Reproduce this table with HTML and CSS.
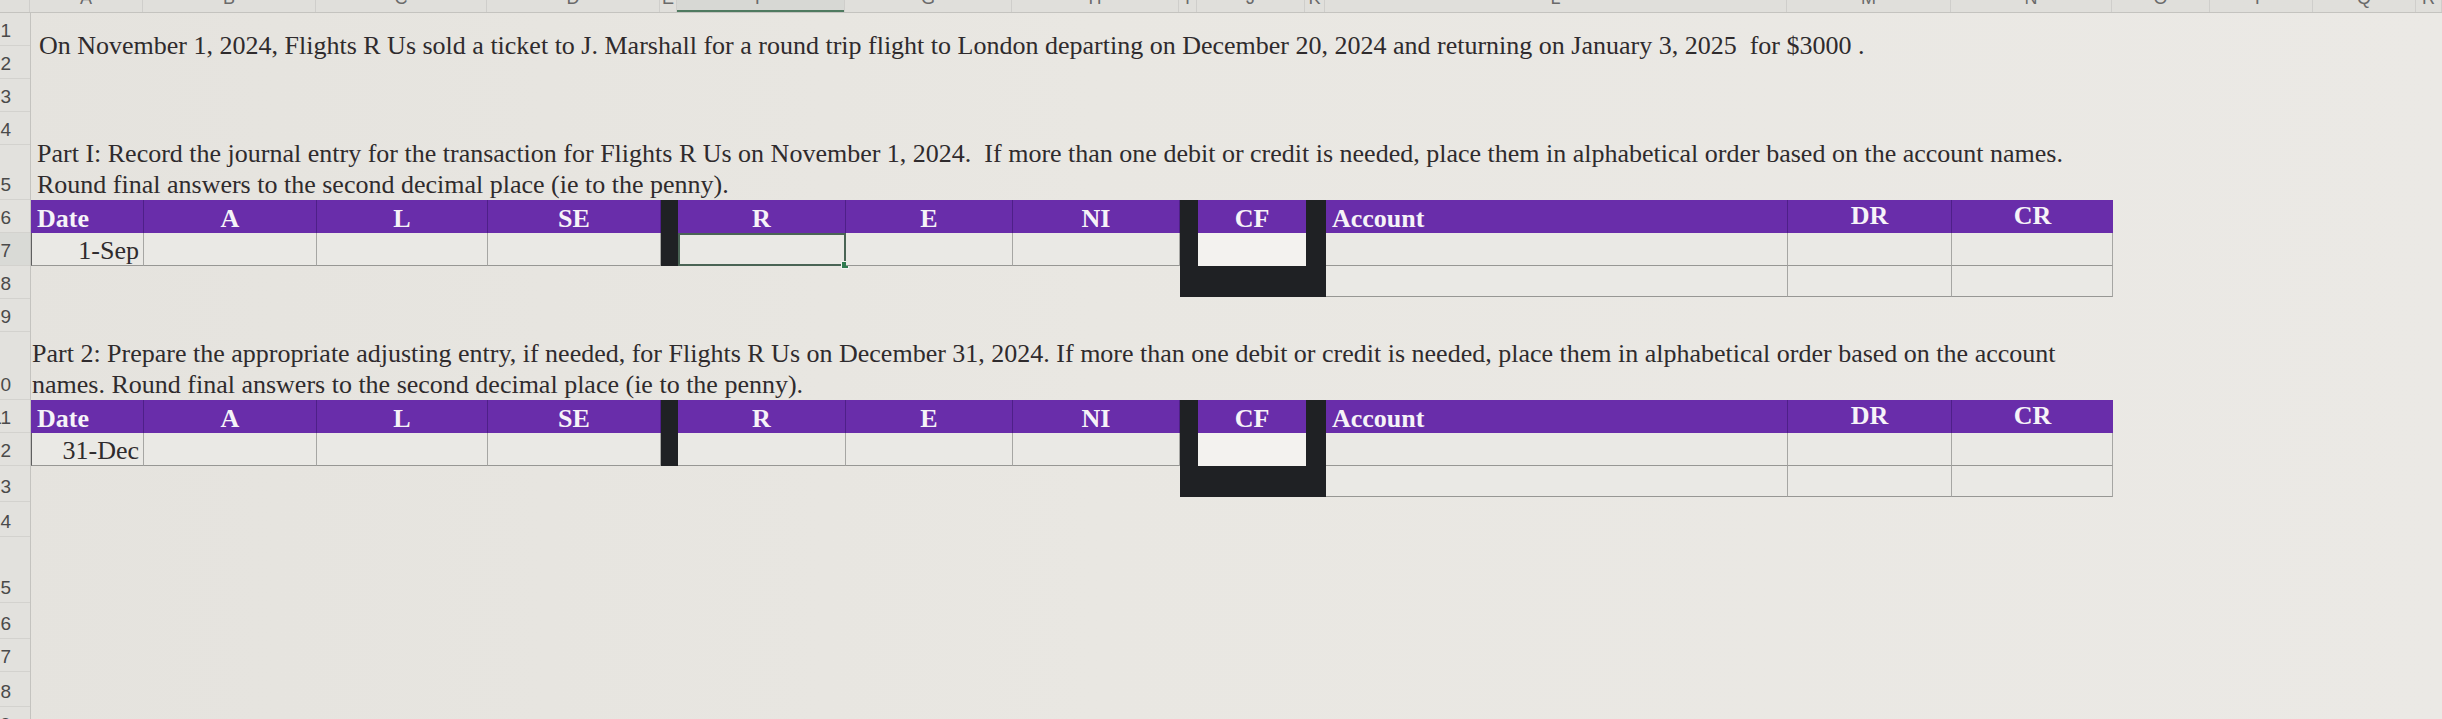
FILE: index.html
```html
<!DOCTYPE html>
<html>
<head>
<meta charset="utf-8">
<title>Flights R Us</title>
<link rel="stylesheet" href="styles.css">
</head>
<body>
<div class="sheet">
  <div class="colhead">
    <div class="corner"></div>
    <div class="ch">A</div><div class="ch">B</div><div class="ch">C</div><div class="ch">D</div>
    <div class="ch">E</div><div class="ch sel">F</div><div class="ch">G</div><div class="ch">H</div>
    <div class="ch">I</div><div class="ch">J</div><div class="ch">K</div><div class="ch">L</div>
    <div class="ch">M</div><div class="ch">N</div><div class="ch">O</div><div class="ch">P</div>
    <div class="ch">Q</div><div class="ch">R</div>
  </div>
  <div class="body">
    <div class="rowhead">
      <div class="rh">1</div>
      <div class="rh">2</div>
      <div class="rh">3</div>
      <div class="rh">4</div>
      <div class="rh h55">5</div>
      <div class="rh">6</div>
      <div class="rh sel">7</div>
      <div class="rh">8</div>
      <div class="rh">9</div>
      <div class="rh h68">10</div>
      <div class="rh">11</div>
      <div class="rh">12</div>
      <div class="rh h36">13</div>
      <div class="rh h35">14</div>
      <div class="rh h66">15</div>
      <div class="rh h36">16</div>
      <div class="rh">17</div>
      <div class="rh h35">18</div>
      <div class="rh">19</div>
    </div>
    <div class="content">
      <div class="intro">On November 1, 2024, Flights R Us sold a ticket to J. Marshall for a round trip flight to London departing on December 20, 2024 and returning on January 3, 2025  for $3000 .</div>
      <div class="para p1"><div>Part I: Record the journal entry for the transaction for Flights R Us on November 1, 2024.  If more than one debit or credit is needed, place them in alphabetical order based on the account names.</div><div>Round final answers to the second decimal place (ie to the penny).</div></div>
      <div class="jt">
        <div class="hd l">Date</div>
        <div class="hd">A</div>
        <div class="hd">L</div>
        <div class="hd">SE</div>
        <div class="blk sep"></div>
        <div class="hd">R</div>
        <div class="hd">E</div>
        <div class="hd">NI</div>
        <div class="blk side"></div>
        <div class="hd cf">CF</div>
        <div class="blk side"></div>
        <div class="hd l acct">Account</div>
        <div class="hd t">DR</div>
        <div class="hd t last">CR</div>

        <div class="dc first">1-Sep</div>
        <div class="dc"></div>
        <div class="dc"></div>
        <div class="dc"></div>
        <div class="dc sel"><span class="handle"></span></div>
        <div class="dc"></div>
        <div class="dc"></div>
        <div class="dc cfcell"></div>
        <div class="dc acct"></div>
        <div class="dc"></div>
        <div class="dc"></div>

        <div class="empty8"></div>
        <div class="blk"></div>
        <div class="dc acct"></div>
        <div class="dc"></div>
        <div class="dc"></div>
      </div>
      <div class="spacer"></div>
      <div class="para p2"><div>Part 2: Prepare the appropriate adjusting entry, if needed, for Flights R Us on December 31, 2024. If more than one debit or credit is needed, place them in alphabetical order based on the account</div><div>names. Round final answers to the second decimal place (ie to the penny).</div></div>
      <div class="jt">
        <div class="hd l">Date</div>
        <div class="hd">A</div>
        <div class="hd">L</div>
        <div class="hd">SE</div>
        <div class="blk sep"></div>
        <div class="hd">R</div>
        <div class="hd">E</div>
        <div class="hd">NI</div>
        <div class="blk side"></div>
        <div class="hd cf">CF</div>
        <div class="blk side"></div>
        <div class="hd l acct">Account</div>
        <div class="hd t">DR</div>
        <div class="hd t last">CR</div>

        <div class="dc first">31-Dec</div>
        <div class="dc"></div>
        <div class="dc"></div>
        <div class="dc"></div>
        <div class="dc"></div>
        <div class="dc"></div>
        <div class="dc"></div>
        <div class="dc cfcell"></div>
        <div class="dc acct"></div>
        <div class="dc"></div>
        <div class="dc"></div>

        <div class="empty8"></div>
        <div class="blk"></div>
        <div class="dc acct"></div>
        <div class="dc"></div>
        <div class="dc"></div>
      </div>
    </div>
  </div>
</div>
</body>
</html>
```
FILE: styles.css
```css
html, body {
  margin: 0;
  padding: 0;
}
body {
  width: 2442px;
  height: 719px;
  overflow: hidden;
  background: #e8e6e1;
  font-family: "Liberation Serif", "Times New Roman", serif;
  color: #2f2b2d;
}
.sheet {
  margin-top: -20px;
  height: 739px;
  background: linear-gradient(90deg, #e5e3de 0%, #e9e7e2 45%, #ebe9e5 100%);
}

/* column letters */
.colhead {
  display: grid;
  grid-template-columns: 30px 113px 173px 171px 173px 17px 168px 167px 167px 18px 108px 20px 462px 164px 161px 98px 103px 103px 1fr;
  height: 33px;
  box-sizing: border-box;
  border-bottom: 1px solid #c4c3bf;
  background: #e0dfdb;
  font-family: "Liberation Sans", Arial, sans-serif;
  font-size: 18px;
  color: #6a6a6a;
}
.corner {
  border-right: 1px solid #cfcecb;
}
.ch {
  text-align: center;
  line-height: 26px;
  padding-top: 5px;
  border-right: 1px solid #cfcecb;
  overflow: hidden;
}
.ch.sel {
  background: #d7d8d4;
  box-shadow: inset 0 -2px 0 #4f7a60;
}

/* body: row numbers + content */
.body {
  display: flex;
}
.rowhead {
  flex: none;
  width: 46px;
  margin-left: -16px;
  background: #e2e1dd;
  border-right: 1px solid #c4c3bf;
  font-family: "Liberation Sans", Arial, sans-serif;
  font-size: 19px;
  color: #4a4a4a;
  overflow: hidden;
}
.rh {
  height: 33px;
  box-sizing: border-box;
  border-bottom: 1px solid #d3d2ce;
  display: flex;
  align-items: flex-end;
  justify-content: flex-end;
  padding: 0 19px 4px 0;
  line-height: 20px;
}
.rh.h35 { height: 35px; }
.rh.h36 { height: 36px; }
.rh.h55 { height: 55px; }
.rh.h66 { height: 66px; }
.rh.h68 { height: 68px; }
.rh.sel {
  background: #d9dad6;
}

.content {
  flex: 1;
  min-width: 0;
}
.intro {
  height: 125px;
  box-sizing: border-box;
  padding: 18px 0 0 8px;
  font-size: 26px;
  line-height: 30px;
  white-space: pre;
}
.para {
  height: 62px;
  font-size: 26px;
  line-height: 31px;
  white-space: pre;
}
.p1 { padding-left: 6px; }
.p2 { padding-left: 1px; }
.spacer { height: 41px; }

/* journal tables */
.jt {
  display: grid;
  grid-template-columns: 113px 173px 171px 173px 17px 168px 167px 167px 18px 108px 20px 462px 164px 161px;
  grid-template-rows: 33px 33px 31px;
  width: max-content;
}
.hd {
  background: #692daa;
  color: #f6f3f8;
  font-weight: bold;
  font-size: 26px;
  line-height: 28px;
  display: flex;
  align-items: flex-end;
  justify-content: center;
  border-right: 1px solid #4e2088;
  box-sizing: border-box;
}
.hd.l {
  justify-content: flex-start;
  padding-left: 6px;
}
.hd.t {
  padding-bottom: 3px;
}
.hd.cf,
.hd.last {
  border-right: none;
}
.blk {
  background: #1f2124;
}
.sep {
  grid-row: span 2;
}
.side {
  grid-row: span 3;
}
.empty8 {
  grid-column: span 8;
}
.dc {
  position: relative;
  box-sizing: border-box;
  background: #eae9e5;
  border-right: 1px solid #a6a6a3;
  border-bottom: 1px solid #979794;
  font-size: 26px;
  line-height: 28px;
  display: flex;
  align-items: flex-end;
  justify-content: flex-end;
  padding-right: 4px;
}
.dc.first {
  border-left: 1px solid #5f5f5f;
}
.dc.cfcell {
  background: #f3f2ef;
  border: none;
}
.dc.sel {
  border: 2px solid #4a6455;
}
.handle {
  position: absolute;
  right: -5px;
  bottom: -5px;
  width: 6px;
  height: 6px;
  background: #2f7a4f;
  border: 1px solid #f2f2f2;
}
```
